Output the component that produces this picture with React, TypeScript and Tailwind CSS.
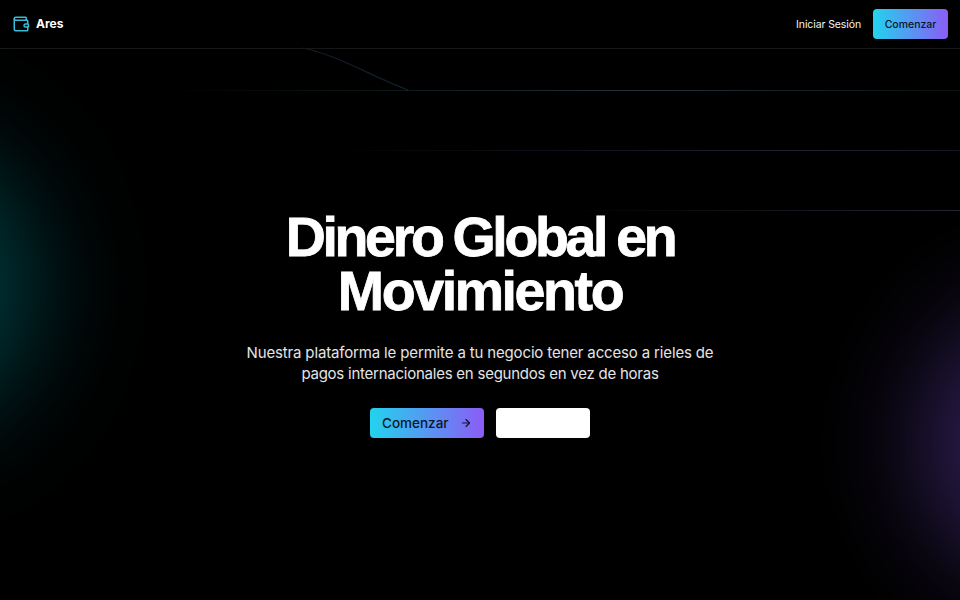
import { ArrowRight } from "lucide-react";

function WalletIcon() {
  return (
    <svg viewBox="0 0 24 24" className="size-[18px] shrink-0" fill="none" stroke="#38bdd8" strokeWidth="2" strokeLinecap="round" strokeLinejoin="round">
      <path d="M19 7V4a1 1 0 0 0-1-1H5a2 2 0 0 0 0 4h15a1 1 0 0 1 1 1v4h-3a2 2 0 0 0 0 4h3a1 1 0 0 0 1-1v-2a1 1 0 0 0-1-1" />
      <path d="M3 5v14a2 2 0 0 0 2 2h15a1 1 0 0 0 1-1v-4" />
    </svg>
  );
}

function Backdrop() {
  return (
    <div className="pointer-events-none absolute inset-0 overflow-hidden">
      <div className="absolute top-[141px] left-[-256px] size-[288px] rounded-full bg-[#00d3e6]/30 blur-[56px]" />
      <div className="absolute top-[299px] right-[-248px] size-[288px] rounded-full bg-[#8b5cf6]/34 blur-[52px]" />
      <svg className="absolute inset-0" width="960" height="600" fill="none">
        <defs>
          <linearGradient id="line-a" gradientUnits="userSpaceOnUse" x1="160" y1="0" x2="1120" y2="0">
            <stop offset="0" stopColor="#123238" stopOpacity="0" />
            <stop offset="0.5" stopColor="#26323a" />
            <stop offset="1" stopColor="#123238" stopOpacity="0" />
          </linearGradient>
          <linearGradient id="line-b" gradientUnits="userSpaceOnUse" x1="320" y1="0" x2="1280" y2="0">
            <stop offset="0" stopColor="#1f2233" stopOpacity="0" />
            <stop offset="0.5" stopColor="#1f2233" />
            <stop offset="1" stopColor="#1f2233" stopOpacity="0" />
          </linearGradient>
          <linearGradient id="line-c" gradientUnits="userSpaceOnUse" x1="560" y1="0" x2="960" y2="0">
            <stop offset="0" stopColor="#252533" stopOpacity="0" />
            <stop offset="1" stopColor="#252533" />
          </linearGradient>
        </defs>
        <path d="M303 48C340 56 368 75 408 90" stroke="#131f2a" strokeWidth="1.2" />
        <path d="M160 90.5H960" stroke="url(#line-a)" />
        <path d="M320 150.5H960" stroke="url(#line-b)" />
        <path d="M560 210.5H960" stroke="url(#line-c)" />
      </svg>
    </div>
  );
}

export default function App() {
  return (
    <div className="relative flex h-[600px] w-[960px] flex-col overflow-hidden bg-black font-['Inter',sans-serif] text-white">
      <Backdrop />
      <header className="relative flex h-[49px] shrink-0 items-center justify-between border-b border-[#171717] px-3">
        <a className="flex items-center gap-1.5">
          <WalletIcon />
          <span className="text-[12px] font-bold">Ares</span>
        </a>
        <nav className="flex items-center gap-3">
          <a className="pt-px text-[10.5px] tracking-[-0.01em] whitespace-nowrap text-[#f4f4f5]">Iniciar Sesión</a>
          <button className="flex h-[30px] w-[75px] items-center justify-center rounded-[4px] bg-linear-to-r/srgb from-[#22d3ee] to-[#8b5cf6] pt-px text-[10.5px] font-medium text-[#0a1628]">
            Comenzar
          </button>
        </nav>
      </header>
      <main className="relative flex flex-col items-center pt-[161px] text-center">
        <h1 className="font-['Liberation_Sans',sans-serif] text-[55.5px] leading-[54px] font-bold [-webkit-text-stroke:0.8px_white]">
          <span className="block tracking-[-3.35px] whitespace-nowrap [word-spacing:-1px]">Dinero Global en</span>
          <span className="block tracking-[-2.4px] whitespace-nowrap">Movimiento</span>
        </h1>
        <p className="mt-6 text-[15px] leading-[21px] text-[#e4e4e7]">
          <span className="block tracking-[-0.15px] whitespace-nowrap">Nuestra plataforma le permite a tu negocio tener acceso a rieles de</span>
          <span className="block tracking-[-0.24px] whitespace-nowrap">pagos internacionales en segundos en vez de horas</span>
        </p>
        <div className="mt-6 flex gap-3">
          <button className="flex h-[30px] w-[114px] items-center justify-between rounded-[4px] bg-linear-to-r/srgb from-[#22d3ee] to-[#8b5cf6] px-3 text-[13.5px] font-medium text-[#0a1628]">
            Comenzar
            <ArrowRight size={12} strokeWidth={2.2} />
          </button>
          <button className="h-[30px] w-[94px] rounded-[4px] bg-white" />
        </div>
      </main>
    </div>
  );
}
